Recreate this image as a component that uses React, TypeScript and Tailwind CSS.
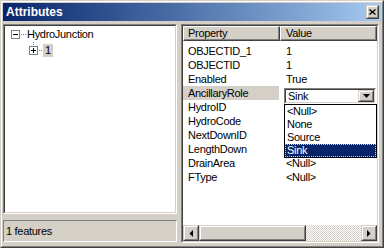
import React from "react";

const rows: [string, string][] = [
  ["OBJECTID_1", "1"],
  ["OBJECTID", "1"],
  ["Enabled", "True"],
  ["AncillaryRole", ""],
  ["HydroID", ""],
  ["HydroCode", ""],
  ["NextDownID", ""],
  ["LengthDown", ""],
  ["DrainArea", "<Null>"],
  ["FType", "<Null>"],
];

const options = ["<Null>", "None", "Source", "Sink"];

const Sunken: React.FC<{ className?: string; inner?: string; children?: React.ReactNode }> = ({
  className = "",
  inner = "",
  children,
}) => (
  <div className={`border border-t-[#808080] border-l-[#808080] border-r-white border-b-white ${className}`}>
    <div className={`h-full border border-t-[#404040] border-l-[#404040] border-r-[#d4d0c8] border-b-[#d4d0c8] ${inner}`}>
      {children}
    </div>
  </div>
);

const Raised: React.FC<{ className?: string; children?: React.ReactNode }> = ({ className = "", children }) => (
  <div className={`border border-t-[#d4d0c8] border-l-[#d4d0c8] border-r-[#404040] border-b-[#404040] ${className}`}>
    <div className="h-full w-full flex items-center justify-center border border-t-white border-l-white border-r-[#808080] border-b-[#808080] bg-[#d4d0c8]">
      {children}
    </div>
  </div>
);

const Arrow: React.FC<{ dir: "left" | "right" | "down" }> = ({ dir }) => {
  const pts =
    dir === "left" ? "4,0 4,7 0.5,3.5" : dir === "right" ? "0,0 0,7 3.5,3.5" : "0,0 7,0 3.5,4";
  const w = dir === "down" ? 7 : 4;
  const h = dir === "down" ? 4 : 7;
  return (
    <svg width={w} height={h} viewBox={`0 0 ${w} ${h}`}>
      <polygon points={pts} fill="#000" />
    </svg>
  );
};

const TreeBox: React.FC<{ sign: "minus" | "plus" }> = ({ sign }) => (
  <g>
    <rect x="0.5" y="0.5" width="8" height="8" fill="#fff" stroke="#808080" />
    <line x1="2" y1="4.5" x2="7" y2="4.5" stroke="#000" />
    {sign === "plus" && <line x1="4.5" y1="2" x2="4.5" y2="7" stroke="#000" />}
  </g>
);

export default function App() {
  return (
    <div className="w-[384px] h-[248px] bg-[#d4d0c8] font-['Liberation_Sans',Arial,sans-serif] text-[11px] tracking-[-0.3px] text-black leading-none">
      <div className="h-full border border-t-[#d4d0c8] border-l-[#d4d0c8] border-r-[#404040] border-b-[#404040]">
        <div className="h-full border border-t-white border-l-white border-r-[#808080] border-b-[#808080] p-[1px] flex flex-col">
          {/* title bar */}
          <div className="h-[18px] flex items-center bg-gradient-to-r from-[#0a246a] to-[#a6caf0] pl-[3px] pr-[2px]">
            <span className="text-white font-bold text-[12px] tracking-[0px]">Attributes</span>
            <Raised className="ml-auto w-[13px] h-[14px]">
              <svg width="7" height="6" viewBox="0 0 7 6">
                <path d="M0.5 0.5 L6.5 5.5 M6.5 0.5 L0.5 5.5" stroke="#000" strokeWidth="1.4" />
              </svg>
            </Raised>
          </div>

          <div className="flex-1 flex gap-[4px] pt-[3px] pb-[1px]">
            {/* left column */}
            <div className="w-[174px] flex flex-col">
              <Sunken className="h-[190px]" inner="bg-white pl-[6px] pt-[0px]">
                <div className="flex items-center h-[16px]">
                  <svg width="15" height="16" viewBox="0 0 15 16">
                    <g transform="translate(0,4)">
                      <TreeBox sign="minus" />
                    </g>
                    <line x1="10" y1="8.5" x2="15" y2="8.5" stroke="#808080" strokeDasharray="1 1" />
                  </svg>
                  <span className="ml-[1px]">HydroJunction</span>
                </div>
                <div className="flex items-center h-[16px] pl-[18px]">
                  <svg width="14" height="16" viewBox="0 0 14 16">
                    <line x1="4.5" y1="-2" x2="4.5" y2="4" stroke="#808080" strokeDasharray="1 1" />
                    <g transform="translate(0,4)">
                      <TreeBox sign="plus" />
                    </g>
                    <line x1="10" y1="8.5" x2="14" y2="8.5" stroke="#808080" strokeDasharray="1 1" />
                  </svg>
                  <span className="bg-[#d4d0c8] h-[13px] px-[2px] flex items-center">1</span>
                </div>
              </Sunken>
              <div className="mt-[6px] h-[22px] border border-t-[#808080] border-l-[#808080] border-r-white border-b-white flex items-center pl-[2px]">
                1 features
              </div>
            </div>

            {/* right column */}
            <Sunken className="w-[198px] h-[219px]" inner="bg-white flex flex-col relative">
              <div className="flex h-[15px]">
                <div className="w-[97px] h-full border border-t-white border-l-white border-r-[#404040] border-b-[#404040] bg-[#d4d0c8]">
                  <div className="h-full border-r border-b border-r-[#808080] border-b-[#808080] flex items-center pl-[4px]">
                    Property
                  </div>
                </div>
                <div className="flex-1 h-full border border-t-white border-l-white border-r-[#404040] border-b-[#404040] bg-[#d4d0c8]">
                  <div className="h-full border-r border-b border-r-[#808080] border-b-[#808080] flex items-center pl-[5px]">
                    Value
                  </div>
                </div>
              </div>
              <div className="flex-1 pt-[3px]">
                {rows.map(([k, v], i) => (
                  <div key={i} className="flex h-[14px] items-center">
                    <div
                      className={`w-[96px] h-full flex items-center pl-[5px] ${
                        k === "AncillaryRole" ? "bg-[#d4d0c8]" : ""
                      }`}
                    >
                      {k}
                    </div>
                    <div className="pl-[7px]">{v}</div>
                  </div>
                ))}
              </div>
              {/* horizontal scrollbar */}
              <div className="h-[16px] flex">
                <Raised className="w-[16px] h-full">
                  <Arrow dir="left" />
                </Raised>
                <Raised className="w-[107px] h-full" />
                <div className="flex-1 h-full bg-[repeating-conic-gradient(#d4d0c8_0_25%,#ffffff_0_50%)] bg-[length:2px_2px]" />
                <Raised className="w-[16px] h-full">
                  <Arrow dir="right" />
                </Raised>
              </div>

              {/* combo editor */}
              <Sunken className="absolute left-[101px] top-[62px] w-[92px] h-[16px]" inner="bg-white flex items-center">
                <span className="pl-[2px]">Sink</span>
                <Raised className="ml-auto w-[16px] h-[12px]">
                  <Arrow dir="down" />
                </Raised>
              </Sunken>
              <div className="absolute left-[101px] top-[78px] w-[93px] border border-black bg-white">
                {options.map((o) => (
                  <div
                    key={o}
                    className={`h-[13px] flex items-center pl-[2px] ${
                      o === "Sink" ? "bg-[#0a246a] text-white outline-1 outline-dotted outline-[#d4d0c8] -outline-offset-1" : ""
                    }`}
                  >
                    {o}
                  </div>
                ))}
              </div>
            </Sunken>
          </div>
        </div>
      </div>
    </div>
  );
}
